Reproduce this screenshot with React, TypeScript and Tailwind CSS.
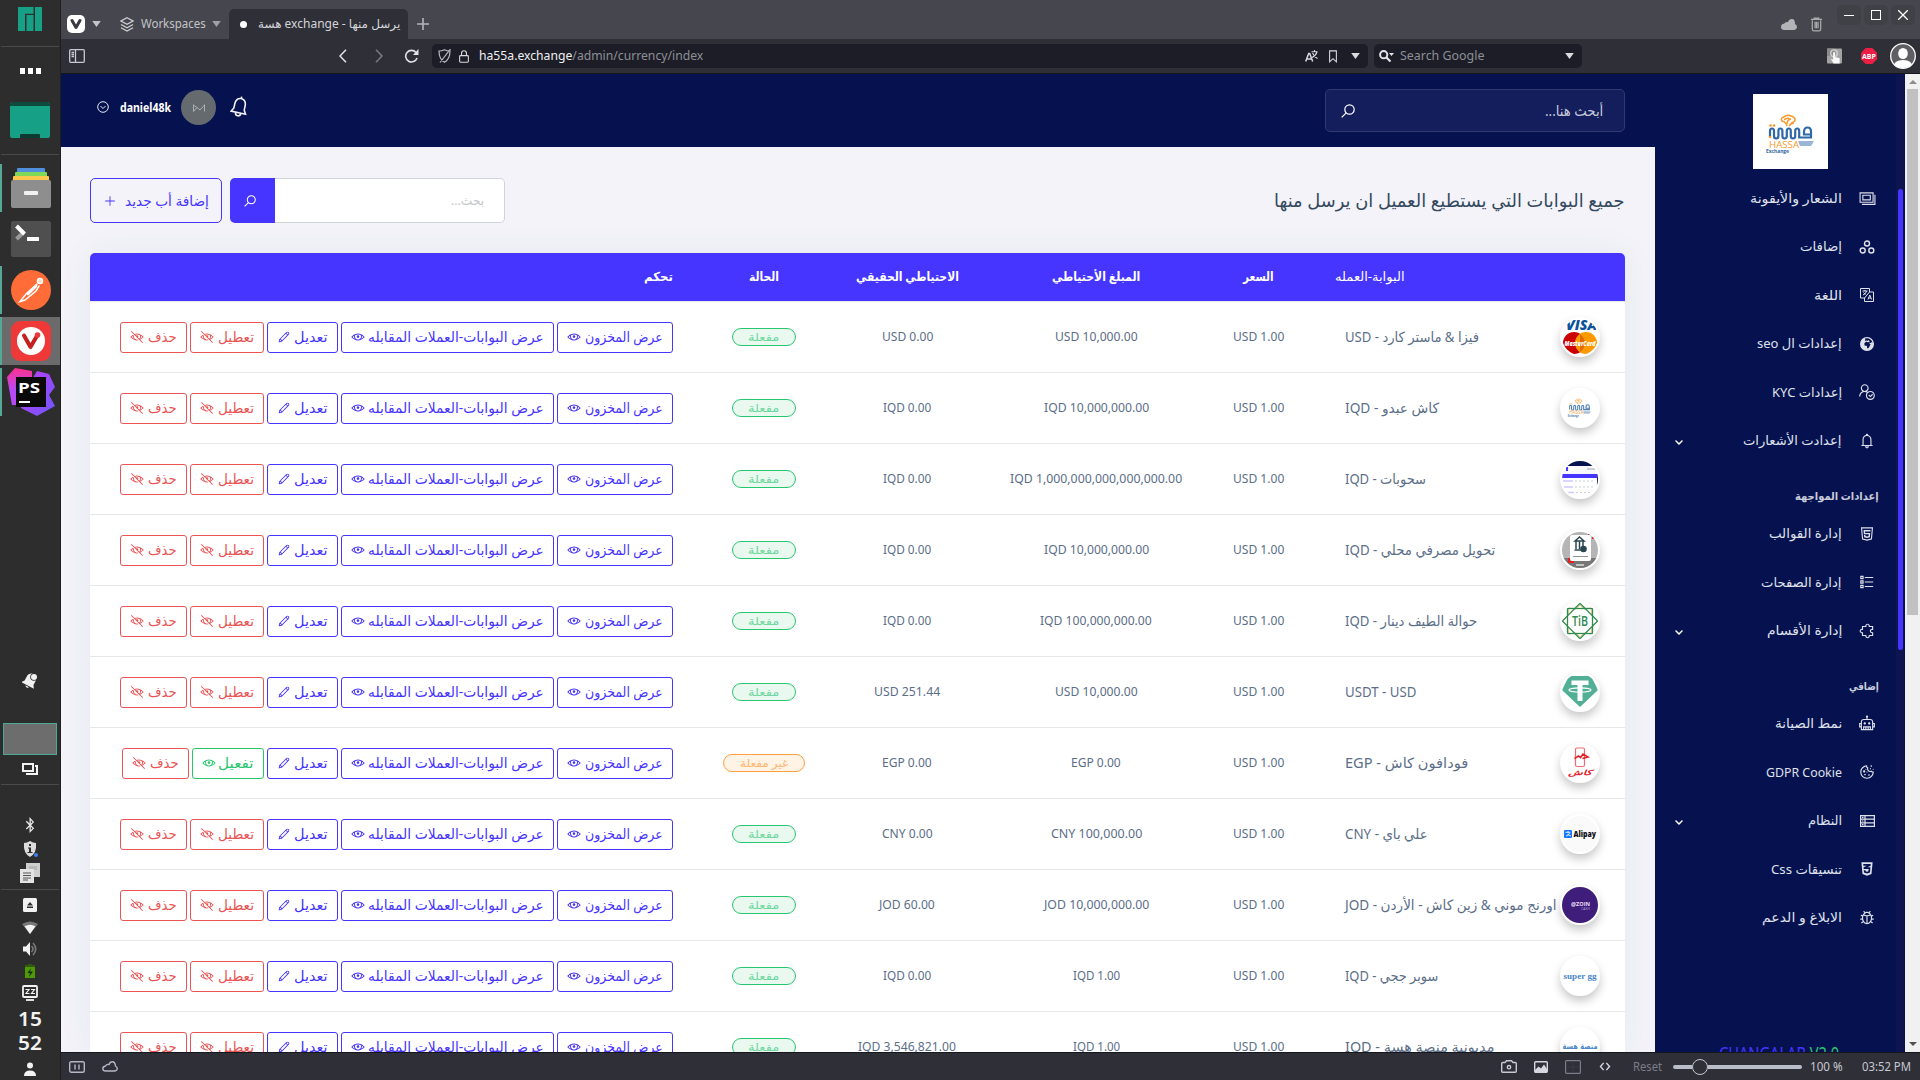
import { useLayoutEffect, useRef, useState } from "react";
import type { ReactNode } from "react";
import {
  LiaEye, LiaEyeSlash, LiaPenSolid, LiaUserCheckSolid, LiaHtml5, LiaPuzzlePieceSolid,
  LiaRobotSolid, LiaCookieBiteSolid, LiaCss3Alt, LiaBugSolid, LiaBell,
  LiaPlusSolid, LiaListSolid,
} from "react-icons/lia";
import { FaChevronDown, FaBluetoothB } from "react-icons/fa";
import { FaEarthAfrica } from "react-icons/fa6";

/* Text squeezed or stretched to an exact advance width. */
function Fit({ w, dir = "rtl", className = "", children }: { w: number; dir?: "rtl" | "ltr"; className?: string; children: ReactNode }) {
  const ref = useRef<HTMLSpanElement>(null);
  const [s, setS] = useState(1);
  useLayoutEffect(() => {
    if (ref.current) setS(w / ref.current.offsetWidth);
  }, [w]);
  return (
    <span dir="ltr" className="flex shrink-0" style={{ width: w }}>
      <span ref={ref} dir={dir} className={"block shrink-0 origin-left whitespace-nowrap " + className} style={{ transform: `scaleX(${s})` }}>
        {children}
      </span>
    </span>
  );
}

function Caret({ className = "" }: { className?: string }) {
  return <svg viewBox="0 0 10 7" className={"h-[6px] w-[9px] shrink-0 " + className}><path d="M0 0h10L5 7z" fill="currentColor" /></svg>;
}

function SearchIcon({ className = "" }: { className?: string }) {
  return <svg viewBox="0 0 14 14" className={"shrink-0 " + className} fill="none" stroke="currentColor" strokeWidth="1.200"><circle cx="8.500" cy="5.500" r="4.700" /><path d="M5.200 8.800.7 13.300" /></svg>;
}

/* ---------- desktop panel ---------- */
function Task({ children, active = false, bar = true, className = "" }: { children: ReactNode; active?: boolean; bar?: boolean; className?: string }) {
  return (
    <div className={"flex h-12 w-[60px] shrink-0 items-center " + (active ? "bg-[#6b6b6b] " : "") + className}>
      <div className={"h-12 w-[2px] shrink-0 " + (bar ? "bg-[#55a896]" : "")} />
      <div className="flex flex-1 justify-center">{children}</div>
    </div>
  );
}

function Panel() {
  return (
    <div className="flex h-full w-[61px] shrink-0 flex-col items-center overflow-hidden border-r border-[#1f1f1f] bg-[#2d2d2d]">
      <svg viewBox="0 0 24 24" className="mt-[7px] h-6 w-6 shrink-0" fill="#16a085"><path d="M0 0h15.500v6.700H7V24H0zM8.500 8H15.500v16H8.500zM17 0h7v24h-7z" /></svg>
      <div className="mt-[15px] h-px w-[58px] shrink-0 bg-[#4a4a4a]" />
      <div className="mt-[21px] flex shrink-0 gap-[3px]">
        <div className="h-[6px] w-[5px] bg-white" /><div className="h-[6px] w-[5px] bg-white" /><div className="h-[6px] w-[5px] bg-white" />
      </div>
      <svg viewBox="0 0 40 36" className="mt-[28px] h-9 w-10 shrink-0"><path d="M2 0h36l2 2v32q0 2-2 2H2q-2 0-2-2V2z" fill="#16a085" /><path d="M2 0h36l2 2v2H0V2z" fill="#0f4a3f" /><path d="M10 36v-3q0-1 1-1h18q1 0 1 1v3z" fill="#0d3a32" /></svg>
      <div className="mt-[16px] h-px w-[58px] shrink-0 bg-[#4a4a4a]" />
      <Task className="mt-[9px]">
        <svg viewBox="0 0 40 40" className="h-10 w-10"><rect x="6" width="28" height="9" rx="1" fill="#508fdb" /><rect x="4" y="4" width="32" height="9" rx="1" fill="#7fd858" /><rect x="2" y="8" width="36" height="9" rx="1" fill="#fdc94c" /><rect y="12" width="40" height="28" rx="2" fill="#8e8e8e" /><rect x="13" y="23" width="14" height="4" rx="1" fill="#f1f1f1" /></svg>
      </Task>
      <Task bar={false} className="mt-[3px]">
        <svg viewBox="0 0 40 36" className="h-9 w-10"><rect width="40" height="36" rx="2" fill="#4f4f4f" /><path d="m5.500 18 7-6.500" stroke="#9a9a9a" strokeWidth="4" /><path d="m5.500 5 8 8" stroke="#fff" strokeWidth="4" /><rect x="16" y="16" width="12" height="4" rx=".5" fill="#fff" /></svg>
      </Task>
      <Task className="mt-[3px]">
        <svg viewBox="0 0 40 40" className="h-10 w-10"><circle cx="20" cy="20" r="20" fill="#ff6c37" /><g stroke="#fff" fill="none" strokeWidth="1.500" strokeLinecap="round"><circle cx="29" cy="11" r="2.500" fill="#ffd9cb" /><path d="M26 14 15 24 9 31.500l5-1.500 11-9 3-5M24 16l-7 7" /><path d="m25 16-8 8" strokeWidth="2.600" /></g></svg>
      </Task>
      <Task active className="mt-[3px]">
        <svg viewBox="0 0 40 40" className="h-10 w-10"><rect width="40" height="40" rx="9" fill="#ef3939" /><circle cx="20" cy="20" r="14" fill="#fff" /><path d="M13 14.500 19.500 26 26.500 14" fill="none" stroke="#c4201f" strokeWidth="4" strokeLinecap="round" strokeLinejoin="round" /><circle cx="26.500" cy="14" r="2.800" fill="#ef3939" /></svg>
      </Task>
      <Task className="mt-[3px]">
        <svg viewBox="0 0 48 48" className="h-12 w-12">
          <defs><linearGradient id="psA" x1="0" y1="0" x2="0" y2="1"><stop offset="0" stopColor="#ff318c" /><stop offset=".6" stopColor="#b74af7" /></linearGradient><linearGradient id="psB" x1="0" y1="0" x2="1" y2="1"><stop offset="0" stopColor="#c53df0" /><stop offset="1" stopColor="#6b57ff" /></linearGradient></defs>
          <path d="M14 40V30L30 3l12 3 6 13-6 8 6 11-18 10z" fill="url(#psB)" /><path d="M0 9 8 0l17 3v15L13 37H5z" fill="url(#psA)" /><rect x="9" y="9" width="30" height="30" fill="#0a0a0a" /><rect x="12" y="33" width="11" height="2" fill="#fff" /><text x="11" y="24.500" fontSize="15" fontWeight="700" fill="#fff" fontFamily="Open Sans, sans-serif" textLength="22" lengthAdjust="spacingAndGlyphs">PS</text>
        </svg>
      </Task>
      <div className="flex-1" />
      <svg viewBox="0 0 16 16" className="h-4 w-4 shrink-0" fill="#f2f2f2"><g transform="rotate(28 8 8)"><path d="M8 0q5 1 5 6v4l2 3H1l2-3V6q0-5 5-6zM6 14h4q-2 3-4 0z" /></g><circle cx="12" cy="4" r="3.800" fill="#2d2d2d" /><circle cx="12" cy="4" r="3" /></svg>
      <div className="mt-[34px] h-8 w-[54px] shrink-0 border border-[#4fa896] bg-[#6d6d6d]" />
      <svg viewBox="0 0 16 12" className="mt-[8px] h-3 w-4 shrink-0" fill="none" stroke="#f2f2f2" strokeWidth="2"><path d="M1 1h10v7H1zM13 3h2v8H4" /></svg>
      <div className="mt-[9px] h-px w-[58px] shrink-0 bg-[#4a4a4a]" />
      <FaBluetoothB className="mt-[32px] h-4 w-4 shrink-0 text-[#e6e6e6]" />
      <svg viewBox="0 0 16 16" className="mt-[8px] h-4 w-4 shrink-0"><path d="M8 0q3 2 6 2 1 10-6 14Q1 12 2 2q3 0 6-2z" fill="#dcdcdc" /><path d="M7 3h2v2H7zM6 6.500h3V11h1.500v1h-5v-1H7V7.500H6z" fill="#2d2d2d" /><circle cx="14" cy="14" r="2" fill="#3b82f6" /></svg>
      <svg viewBox="0 0 20 20" className="mt-[6px] h-5 w-5 shrink-0"><path d="M6 0h14v14H6z" fill="#cfcfcf" /><path d="M9 4h8M9 6h8" stroke="#999" strokeWidth=".8" /><path d="M0 6h14v14H0z" fill="#e4e4e4" /><path d="M3 10h8M3 12.500h8M3 15h8M3 17h5" stroke="#555" /></svg>
      <div className="mt-[6px] h-px w-[58px] shrink-0 bg-[#4a4a4a]" />
      <svg viewBox="0 0 14 14" className="mt-[8px] h-[14px] w-[14px] shrink-0"><rect width="14" height="14" rx="1.500" fill="#f2f2f2" /><path d="m7 4 3 3.500H4zM4 8.500h6V10H4z" fill="#2d2d2d" /></svg>
      <svg viewBox="0 0 16 13" className="mt-[9px] h-[13px] w-4 shrink-0"><path d="M8 13 0 3q8-5 16 0z" fill="#777" /><path d="M8 13 2.500 5.300q5.500-3 11 0z" fill="#f2f2f2" /></svg>
      <svg viewBox="0 0 16 14" className="mt-[8px] h-[14px] w-4 shrink-0"><path d="M1 4.500h3L8 0v14L4 9.500H1z" fill="#f2f2f2" /><path d="M9.500 4q3 3 0 6M11 1q5.500 6 0 12" fill="none" stroke="#7a7a7a" strokeWidth="1.600" /></svg>
      <svg viewBox="0 0 10 14" className="mt-[8px] h-[14px] w-[10px] shrink-0"><path d="M3 0h4v1h3v2H0V1h3z" fill="#2f5a14" /><path d="M0 3h10v11H0z" fill="#4e9a06" /><path d="M6 4 2.500 9H5l-1 4 4-5.500H5z" fill="#1c2a12" /></svg>
      <svg viewBox="0 0 16 16" className="mt-[7px] h-4 w-4 shrink-0" fill="none" stroke="#f2f2f2"><rect x="1" y="1" width="14" height="11" rx="1" strokeWidth="1.800" /><path d="M3.500 4.500h3.500L4 8.500h3.500M9 4.500h3.500L9.500 8.500H13" strokeWidth="1.200" /><path d="M4 15h8" strokeWidth="1.800" /></svg>
      <div className="mt-[6px] flex h-6 shrink-0 items-center"><Fit w={24} dir="ltr" className="font-['Noto_Sans',sans-serif] text-[20px] leading-6 font-semibold text-[#f2f2f2]">15</Fit></div>
      <div className="flex h-6 shrink-0 items-center"><Fit w={24} dir="ltr" className="font-['Noto_Sans',sans-serif] text-[20px] leading-6 font-semibold text-[#f2f2f2]">52</Fit></div>
      <svg viewBox="0 0 12 14" className="mt-[7px] mb-[4px] h-[14px] w-3 shrink-0" fill="#f2f2f2"><circle cx="6" cy="3.500" r="3" /><path d="M0 14q0-5.500 6-5.500T12 14z" /></svg>
    </div>
  );
}

/* ---------- browser chrome ---------- */
function TabBar() {
  return (
    <div className="flex h-[39px] shrink-0 bg-[#46464e] text-[#c4c4c8]">
      <div className="flex w-[168px] items-center pt-[9px] pl-[6px]">
        <div className="flex h-[18px] w-[18px] items-center justify-center rounded-[5px] bg-white"><svg viewBox="0 0 12 12" className="h-3 w-3"><path d="m2 2.500 4 7 4-7" fill="none" stroke="#3a3a42" strokeWidth="3" strokeLinecap="round" strokeLinejoin="round" /></svg></div>
        <Caret className="ml-[7px] h-[6px] w-2" />
        <svg viewBox="0 0 14 15" className="ml-[19px] h-[15px] w-[14px]" fill="none" stroke="#d0d0d4" strokeWidth="1.200"><path d="m7 .8 6 3.200-6 3.200L1 4zM1 7.500l6 3.200 6-3.200M1 10.700l6 3.300 6-3.300" /></svg>
        <div className="ml-[7px]"><Fit w={65} dir="ltr" className="text-[12px]">Workspaces</Fit></div>
        <Caret className="ml-[6px] h-[6px] w-2 text-[#a0a0a4]" />
      </div>
      <div className="mt-[9px] flex w-[179px] items-center rounded-t-[5px] bg-[#2e2f37] pl-[11px]">
        <div className="h-[7px] w-[7px] rounded-full bg-white" />
        <div className="ml-[11px]"><Fit w={142} dir="ltr" className="text-[12px] text-[#d5d5da]">هسة exchange - يرسل منها</Fit></div>
      </div>
      <div className="flex flex-1 items-center pt-[9px] pl-[9px]">
        <svg viewBox="0 0 12 12" className="h-3 w-3"><path d="M6 0v12M0 6h12" stroke="#b5b5b9" strokeWidth="1.600" /></svg>
      </div>
      <div className="flex items-center gap-[13px] pt-[9px] pr-[14px]">
        <svg viewBox="0 0 16 11" className="h-[11px] w-4" fill="#b4b4b8"><path d="M3.500 11Q0 11 0 8t3-3.200Q4.500 2.500 7 3q1-3 4-3t3 5q2 1 2 3t-2.500 3z" /></svg>
        <svg viewBox="0 0 14 15" className="h-[15px] w-[13px]" fill="none" stroke="#aaaaae" strokeWidth="1.300"><path d="M1 2h12M4.500 1.500V.7h5v.8M2.500 3v9.500q0 1.800 2 1.800h5q2 0 2-1.800V3M5.500 4.500v7M7 4.500v7M8.700 4.500v7" /></svg>
      </div>
      <div className="flex gap-[3px] pt-[5px] pr-[5px] text-white">
        <div className="flex h-5 w-6 items-center justify-center rounded-[5px] bg-[#404047]"><div className="h-px w-[10px] bg-white" /></div>
        <div className="flex h-5 w-6 items-center justify-center rounded-[5px] bg-[#404047]"><div className="h-[10px] w-[10px] border border-white" /></div>
        <div className="flex h-5 w-6 items-center justify-center rounded-[5px] bg-[#404047]"><svg viewBox="0 0 10 10" className="h-[10px] w-[10px]"><path d="m0 0 10 10M10 0 0 10" stroke="#fff" strokeWidth="1.300" /></svg></div>
      </div>
    </div>
  );
}

function AddressBar() {
  return (
    <div className="flex h-[35px] shrink-0 items-center border-b border-[#16171d] bg-[#2e2f37] text-[#dcdce0]">
      <svg viewBox="0 0 16 14" className="ml-[8px] h-[14px] w-4" fill="none" stroke="#c6c8d2" strokeWidth="1.300"><rect x=".7" y=".7" width="14.600" height="12.600" rx="1" /><path d="M6.500 1v12M2.500 3.500H5M2.500 5.500H5M2.500 7.500H5" /></svg>
      <div className="flex w-[347px] items-center justify-end pr-[13px]">
        <svg viewBox="0 0 8 14" className="h-[14px] w-2" fill="none" stroke="#e2e3e8" strokeWidth="1.500"><path d="M7 .7 1 7l6 6.300" /></svg>
        <svg viewBox="0 0 8 14" className="ml-[28px] h-[14px] w-2" fill="none" stroke="#7b7c84" strokeWidth="1.500"><path d="m1 .7 6 6.300-6 6.300" /></svg>
        <svg viewBox="0 0 15 14" className="ml-[21px] h-[14px] w-[15px]" fill="none" stroke="#e2e3e8" strokeWidth="1.600"><path d="M12 3.500A5.800 5.800 0 1 0 13 9" /><path d="M14.500 0v6H9z" fill="#e2e3e8" stroke="none" /></svg>
      </div>
      <div className="flex h-6 w-[936px] items-center rounded-[5px] bg-[#1c1d26] pr-[8px] pl-[6px]">
        <svg viewBox="0 0 13 14" className="h-[14px] w-[13px]" fill="none" stroke="#b9bac4" strokeWidth="1.200"><path d="M1 2q3 0 5.500-1.300Q9 2 12 2q0 8-5.500 11.300Q1 10 1 2zM12.500 0 2 13.500" /></svg>
        <svg viewBox="0 0 11 14" className="ml-[8px] h-[13px] w-[10px]" fill="none" stroke="#d9dae0" strokeWidth="1.200"><rect x=".7" y="6" width="9.600" height="7.300" rx="1" /><path d="M2.800 6V3.500q0-2.800 2.700-2.800T8.200 3.500V6" /></svg>
        <div className="ml-[10px]"><Fit w={224} dir="ltr" className="text-[13px] text-[#8e8f97]"><span className="text-[#f0f0f2]">ha55a.exchange</span>/admin/currency/index</Fit></div>
        <div className="flex-1" />
        <svg viewBox="0 0 13 12" className="h-3 w-[13px]" fill="none" stroke="#d9dae0" strokeWidth="1.500"><path d="m.7 11.500 3-8h1l3 8M1.700 9h5" /><path d="M6.500 1.800h6M9.500 0v2M7 7.500q4-2 5-5.500M7.500 3q2 4 5 5.500" strokeWidth="1.100" /></svg>
        <svg viewBox="0 0 9 14" className="ml-[11px] h-[13px] w-2" fill="none" stroke="#d9dae0" strokeWidth="1.200"><path d="M.7.700h7.600v12.300L4.500 9.500.700 13z" /></svg>
        <Caret className="ml-[14px] h-[6px] w-2" />
      </div>
      <div className="ml-[6px] flex h-6 w-[208px] items-center rounded-[5px] bg-[#1c1d26] pr-[8px] pl-[5px]">
        <svg viewBox="0 0 15 12" className="h-3 w-[15px]" fill="none" stroke="#e2e3e8"><circle cx="4.700" cy="4.700" r="3.600" strokeWidth="2" /><path d="m7.500 7.500 4 4" strokeWidth="2.200" /><path d="M10 3h5l-2.500 3z" fill="#e2e3e8" stroke="none" /></svg>
        <div className="ml-[6px]"><Fit w={84} dir="ltr" className="text-[13px] text-[#8e8f97]">Search Google</Fit></div>
        <div className="flex-1" />
        <Caret className="h-[6px] w-2" />
      </div>
      <div className="flex-1" />
      <svg viewBox="0 0 16 16" className="h-4 w-[15px]"><rect width="16" height="16" rx="1" fill="#a3a3a3" /><path d="M0 0h8v8H0z" fill="#8a8a8a" /><circle cx="7.500" cy="5" r="3.500" fill="none" stroke="#cfcfcf" strokeWidth="1.500" /><path d="M6.500 4h2v5l5 1.500V16H7l-3-5 2.500 1z" fill="#fafafa" /></svg>
      <svg viewBox="0 0 16 16" className="ml-[19px] h-4 w-4"><path d="M4.700 0h6.600L16 4.700v6.600L11.300 16H4.700L0 11.300V4.700z" fill="#ed1e45" /><text x="8" y="10.800" textAnchor="middle" fontSize="7.500" fontWeight="700" fill="#fff" fontFamily="Open Sans, sans-serif" textLength="14" lengthAdjust="spacingAndGlyphs">ABP</text></svg>
      <svg viewBox="0 0 26 26" className="mr-[4px] ml-[13px] h-[26px] w-[26px]"><defs><clipPath id="av"><circle cx="13" cy="13" r="12" /></clipPath></defs><circle cx="13" cy="13" r="12.300" fill="#5f5f63" stroke="#fff" strokeWidth="1.300" /><g clipPath="url(#av)" fill="#fff"><ellipse cx="13" cy="10.500" rx="4.800" ry="5.500" /><path d="M3 26q0-9 10-9t10 9z" /></g></svg>
    </div>
  );
}

function StatusBar() {
  return (
    <div className="flex h-7 shrink-0 items-center border-t border-[#16171d] bg-[#2e2f37] text-[#c6c8d2]">
      <svg viewBox="0 0 16 12" className="ml-[8px] h-3 w-4" fill="none" stroke="#b4b8c6" strokeWidth="1.400"><rect x=".7" y=".7" width="14.600" height="10.600" rx="1.500" /><path d="M6 3.500v5M10 3.500v5" /></svg>
      <svg viewBox="0 0 16 11" className="ml-[17px] h-[11px] w-4" fill="none" stroke="#b4b8c6" strokeWidth="1.400"><path d="M3.500 10Q.8 10 .8 7.700T3.500 5Q4.500 3 7 3.500 8 .8 10.500.8T13.500 5q1.800 1 1.800 2.700T13 10z" /></svg>
      <div className="flex-1" />
      <svg viewBox="0 0 16 13" className="h-[13px] w-4" fill="none" stroke="#c6c8d2" strokeWidth="1.400"><path d="M1.700 2.500H4L5.500.7h5L12 2.500h2.300q1 0 1 1v7.800q0 1-1 1H1.700q-1 0-1-1V3.500q0-1 1-1z" /><circle cx="8" cy="7.200" r="1.700" /></svg>
      <svg viewBox="0 0 14 12" className="ml-[17px] h-3 w-[14px]"><rect x=".7" y=".7" width="12.600" height="10.600" rx="1" fill="none" stroke="#d4d7e0" strokeWidth="1.400" /><path d="M1 9 4.500 5.500 7 7.500 10 3.500 13 8v3.300H1z" fill="#d4d7e0" /></svg>
      <svg viewBox="0 0 16 14" className="ml-[17px] h-[14px] w-4" fill="none" stroke="#7b7d88" strokeWidth="1.200"><rect x=".6" y=".6" width="14.800" height="12.800" rx="1" /><path d="M8 1v12M1 7h14" stroke="#3d3e48" strokeWidth=".8" /></svg>
      <svg viewBox="0 0 12 10" className="ml-[18px] h-[9px] w-3" fill="none" stroke="#d4d7e0" strokeWidth="1.600"><path d="M4.500 1 1 5l3.500 4M7.500 1 11 5 7.500 9" /></svg>
      <div className="ml-[22px]"><Fit w={29} dir="ltr" className="text-[12px] text-[#7b7d88]">Reset</Fit></div>
      <div className="ml-[11px] flex w-[129px] items-center">
        <div className="h-1 w-[19px] rounded-l bg-[#b9bcc9]" />
        <div className="h-4 w-4 rounded-full border border-[#c6c8d2] bg-[#2e2f37]" />
        <div className="h-1 flex-1 rounded-r bg-[#b9bcc9]" />
      </div>
      <div className="ml-[8px]"><Fit w={33} dir="ltr" className="text-[12px]">100 %</Fit></div>
      <div className="mr-[9px] ml-[19px]"><Fit w={49} dir="ltr" className="text-[12px]">03:52 PM</Fit></div>
    </div>
  );
}

/* ---------- logos ---------- */
function HassaMark() {
  return (
    <g>
      <path d="M34 21q-1-4-5-5-2-3 2-4 3-3 7-1 4 1 4 4 0 2-4 3M34 19q0-4 4-5M31 15q3-3 6-1M36 21q2-3 5-3" fill="none" stroke="#f79a2b" strokeWidth="1.500" />
      <circle cx="17.500" cy="20.500" r="1.300" fill="#f79a2b" /><circle cx="21" cy="20.500" r="1.300" fill="#f79a2b" /><circle cx="17" cy="32" r="1.300" fill="#f79a2b" />
      <path d="M17 31v-5q0-2.500 2-2.500t2 2.500v5q0 2.500 2.200 2.500t2.200-2.500v-5q0-2.500 2-2.500t2 2.500v5q0 2.500 2.200 2.500t2.200-2.500v-5q0-2.500 2-2.500t2 2.500v5q0 2.500 2.200 2.500t2.200-2.500v-5q0-2.500 2-2.500t2 2.500v6.500H58v-6q0-4-3.500-4T51 27v2.500h7" fill="none" stroke="#2f69a8" strokeWidth="2.200" />
      <text x="16" y="42.500" fontSize="9.800" fill="#f79a2b" fontFamily="Open Sans, sans-serif" textLength="30" lengthAdjust="spacingAndGlyphs">HASSA</text>
      <path d="M45 36h16l-3 5H47z" fill="#6f96c4" opacity=".7" />
      <text x="13" y="47.500" fontSize="5.500" fontWeight="700" fill="#2f69a8" fontFamily="Open Sans, sans-serif" textLength="23" lengthAdjust="spacingAndGlyphs">Exchange</text>
    </g>
  );
}

function Logo({ kind }: { kind: string }) {
  const f = "Open Sans, sans-serif";
  return (
    <div className="h-10 w-10 shrink-0 overflow-hidden rounded-full border-2 border-white bg-white shadow-[0_5px_10px_rgba(0,0,0,0.22)]">
      <svg viewBox="2 2 36 36" className="h-9 w-9">
        {kind === "visa" && <g><text x="6" y="13" fontSize="14" fontStyle="italic" fontWeight="800" fill="#0a5299" fontFamily={f} textLength="31" lengthAdjust="spacingAndGlyphs">VISA</text><circle cx="14" cy="26" r="11" fill="#cc0000" /><circle cx="26" cy="26" r="11" fill="#ff9900" /><path d="M20 17v18q5-4 5-9t-5-9" fill="#e06a00" /><text x="4.500" y="28.500" fontSize="7.500" fontStyle="italic" fontWeight="800" fill="#fff" fontFamily={f} textLength="31" lengthAdjust="spacingAndGlyphs">MasterCard</text></g>}
        {kind === "hassa" && <g transform="translate(1.500 6) scale(.48)" opacity=".85"><HassaMark /></g>}
        {kind === "shot" && <g><path d="M2 2h36v5H2z" fill="#06114f" /><path d="M2 7h36v31H2z" fill="#f6f6fb" /><path d="M2 15h35v4H2z" fill="#4634ff" /><path d="M6 8h2v4H6z" fill="#4634ff" /><path d="M9 8h6v4H9z" fill="#fff" /><path d="M27 10h9" stroke="#99aaaa" strokeWidth="1" /><path d="M2 19h34v19H2z" fill="#fff" /><path d="M3 22h10M3 28h10M7 33.500h7" stroke="#cfc9ff" strokeWidth="1.500" /><path d="M15 22h20M15 28h20M16 33.500h16" stroke="#c5d0d4" strokeWidth="1" strokeDasharray="2 2" /><path d="M37 15h1v12h-1z" fill="#06114f" /></g>}
        {kind === "bank" && <g><path d="M2 2h36v36H2z" fill="#b5b5b5" /><path d="M2 28h36v10H2z" fill="#777" /><path d="M28 4h5v5" fill="none" stroke="#e22222" strokeWidth="2" /><path d="M9 28v4h5" fill="none" stroke="#e22222" strokeWidth="2" /><rect x="10" y="5" width="21" height="26" rx="2" fill="#fff" /><path d="m15 11 4.500-4 4.500 4zM16 11v8M19.500 11v8M23 11v5M14.500 20h7" fill="none" stroke="#2c4552" strokeWidth="1.500" /><circle cx="23.500" cy="19" r="3.300" fill="#2c4552" /><path d="M13 26.500h15" stroke="#88939a" strokeWidth="1" /><path d="M16 35h8" stroke="#dddddd" strokeWidth="1.500" /></g>}
        {kind === "tib" && <g fill="none"><g stroke="#f2c878" strokeWidth="1"><path d="m20 4 4 4 7-1 1 7 5 6-5 6-1 7-7-1-4 4-4-4-7 1-1-7-5-6 5-6 1-7 7 1z" /></g><g stroke="#2f8a50" strokeWidth="1.300"><rect x="7.500" y="7.500" width="25" height="25" /><rect x="7.500" y="7.500" width="25" height="25" transform="rotate(45 20 20)" /></g><circle cx="20" cy="20" r="11" fill="#fff" /><text x="12" y="25" fontSize="14" fontWeight="600" fill="#2f8a50" fontFamily={f} textLength="16" lengthAdjust="spacingAndGlyphs">TiB</text></g>}
        {kind === "usdt" && <g><path d="M9 4h22l7 14-18 17L2 18z" fill="#50af95" /><path d="M11.500 8.500h17V13h-6v16h-5V13h-6z" fill="#fff" /><ellipse cx="20" cy="18" rx="11" ry="2.200" fill="none" stroke="#fff" strokeWidth="1.200" /></g>}
        {kind === "voda" && <g><rect x="15.500" y="5" width="9" height="18.500" rx="1.500" fill="none" stroke="#f06a70" strokeWidth="1.200" /><path d="m14.500 15.500 4-2.500 2 1.500 2.500-3.500 5 3-5.500 1.500" fill="none" stroke="#e3222c" strokeWidth="1.600" /><text x="20" y="32" textAnchor="middle" fontSize="7" fontStyle="italic" fontWeight="700" fill="#e3222c" fontFamily="DejaVu Sans, sans-serif" textLength="24" lengthAdjust="spacingAndGlyphs">كاش</text></g>}
        {kind === "alipay" && <g><path d="M2 2h36v36H2z" fill="#fafafa" /><rect x="4" y="16" width="8" height="8" rx="1" fill="#1677ff" /><path d="M5.500 18.300h5M8 17v2M6 22q3-.5 3.500-3M7.500 20.500l3.500 1.500" stroke="#fff" strokeWidth=".8" fill="none" /><text x="13.500" y="22.700" fontSize="8" fontWeight="800" fill="#111" fontFamily={f} textLength="22.500" lengthAdjust="spacingAndGlyphs">Alipay</text></g>}
        {kind === "zain" && <g><path d="M2 2h36v36H2z" fill="#3f1d7a" /><text x="11" y="21" fontSize="6" fontWeight="700" fill="#e8def7" fontFamily={f} textLength="19" lengthAdjust="spacingAndGlyphs">@ZOIN</text><text x="21" y="24.500" fontSize="3.500" fill="#b7a3da" fontFamily={f} textLength="9">CASH</text></g>}
        {kind === "super" && <text x="3.500" y="22.500" fontSize="8.500" fontWeight="700" fill="#4a86c8" fontFamily="Liberation Serif, serif" textLength="33" lengthAdjust="spacingAndGlyphs">super gg</text>}
        {kind === "platform" && <text x="20" y="21.500" textAnchor="middle" fontSize="8.500" fontWeight="700" fill="#4a86c8" fontFamily="DejaVu Sans, sans-serif" textLength="35" lengthAdjust="spacingAndGlyphs">منصة هسة</text>}
      </svg>
    </div>
  );
}

/* ---------- page ---------- */
type Row = { name: string; nw: number; logo: string; res: string; rw: number; real: string; lw: number; off?: boolean };
const rows: Row[] = [
  { name: "فيزا & ماستر كارد - USD", nw: 134, logo: "visa", res: "USD 10,000.00", rw: 83, real: "USD 0.00", lw: 51 },
  { name: "كاش عبدو - IQD", nw: 94, logo: "hassa", res: "IQD 10,000,000.00", rw: 105, real: "IQD 0.00", lw: 48 },
  { name: "سحوبات - IQD", nw: 81, logo: "shot", res: "IQD 1,000,000,000,000,000.00", rw: 172, real: "IQD 0.00", lw: 48 },
  { name: "تحويل مصرفي محلي - IQD", nw: 150, logo: "bank", res: "IQD 10,000,000.00", rw: 105, real: "IQD 0.00", lw: 48 },
  { name: "حوالة الطيف دينار - IQD", nw: 132, logo: "tib", res: "IQD 100,000,000.00", rw: 112, real: "IQD 0.00", lw: 48 },
  { name: "USDT - USD", nw: 71, logo: "usdt", res: "USD 10,000.00", rw: 83, real: "USD 251.44", lw: 66 },
  { name: "فودافون كاش - EGP", nw: 123, logo: "voda", res: "EGP 0.00", rw: 50, real: "EGP 0.00", lw: 50, off: true },
  { name: "علي باي - CNY", nw: 83, logo: "alipay", res: "CNY 100,000.00", rw: 91, real: "CNY 0.00", lw: 51 },
  { name: "اورنج موني & زين كاش - الأردن - JOD", nw: 212, logo: "zain", res: "JOD 10,000,000.00", rw: 105, real: "JOD 60.00", lw: 56 },
  { name: "سوبر ججي - IQD", nw: 93, logo: "super", res: "IQD 1.00", rw: 47, real: "IQD 0.00", lw: 48 },
  { name: "مديونية منصة هسة - IQD", nw: 149, logo: "platform", res: "IQD 1.00", rw: 47, real: "IQD 3,546,821.00", lw: 98 },
];

const GRID = "grid grid-cols-[608px_131px_156px_222px_102px_316px] items-center";

function Action({ text, w, width, tone, icon }: { text: string; w: number; width: string; tone: "blue" | "red" | "green"; icon: ReactNode }) {
  const c = tone === "blue" ? "border-[#4634ff] text-[#4634ff]" : tone === "red" ? "border-[#ea5455] text-[#ea5455]" : "border-[#28c76f] text-[#28c76f]";
  return (
    <div className={"flex h-[31px] shrink-0 items-center justify-between rounded-[3px] border px-[9px] " + width + " " + c}>
      <span className="mb-[1px] flex text-[14px]">{icon}</span>
      <Fit w={w} className="text-[14px] leading-5">{text}</Fit>
    </div>
  );
}

function TableRow({ r }: { r: Row }) {
  return (
    <div className={GRID + " h-[71px] shrink-0 border-t border-[#e5e7ea] text-[#5b6e88]"}>
      <div className="flex justify-end gap-[3px] pr-[25px]">
        <Action text="حذف" w={29} width="w-[67px]" tone="red" icon={<LiaEyeSlash />} />
        {r.off
          ? <Action text="تفعيل" w={36} width="w-[72px]" tone="green" icon={<LiaEye />} />
          : <Action text="تعطيل" w={36} width="w-[74px]" tone="red" icon={<LiaEyeSlash />} />}
        <Action text="تعديل" w={34} width="w-[71px]" tone="blue" icon={<LiaPenSolid />} />
        <Action text="عرض البوابات-العملات المقابله" w={176} width="w-[213px]" tone="blue" icon={<LiaEye />} />
        <Action text="عرض المخزون" w={78} width="w-[116px]" tone="blue" icon={<LiaEye />} />
      </div>
      <div className="flex justify-center">
        {r.off
          ? <div className="flex h-[18px] w-[82px] items-center justify-center rounded-full border border-[#ff9f43] bg-[#fff3e6]"><Fit w={48} className="text-[11px] leading-4 text-[#ffb56e]">غير مفعلة</Fit></div>
          : <div className="flex h-[18px] w-[64px] items-center justify-center rounded-full border border-[#28c76f] bg-[#e9f9f0]"><Fit w={31} className="text-[11px] leading-4 text-[#6fd79f]">مفعلة</Fit></div>}
      </div>
      <div className="flex justify-center"><Fit w={r.lw} dir="ltr" className="text-[13px]">{r.real}</Fit></div>
      <div className="flex justify-center"><Fit w={r.rw} dir="ltr" className="text-[13px]">{r.res}</Fit></div>
      <div className="flex justify-center"><Fit w={51} dir="ltr" className="text-[13px]">USD 1.00</Fit></div>
      <div className="flex items-center justify-between pr-[25px] pl-[36px]">
        <div className="pb-[2px]"><Fit w={r.nw} className="text-[14px]">{r.name}</Fit></div>
        <Logo kind={r.logo} />
      </div>
    </div>
  );
}

function Table() {
  return (
    <div className="mt-[30px] flex flex-1 flex-col overflow-hidden rounded-t-[5px] bg-white shadow-[0_0_35px_rgba(50,60,100,0.06)]">
      <div className={GRID + " h-12 shrink-0 bg-[#4634ff] text-[12.500px] font-bold text-white"}>
        <div className="flex justify-end pr-[25px]"><Fit w={29}>تحكم</Fit></div>
        <div className="flex justify-center"><Fit w={30}>الحالة</Fit></div>
        <div className="flex justify-center"><Fit w={103}>الاحتياطي الحقيقي</Fit></div>
        <div className="flex justify-center"><Fit w={88}>المبلغ الأحتياطي</Fit></div>
        <div className="flex justify-center"><Fit w={31}>السعر</Fit></div>
        <div className="flex pl-[26px] font-normal"><Fit w={70}>البوابة-العمله</Fit></div>
      </div>
      {rows.map((r) => <TableRow key={r.name} r={r} />)}
    </div>
  );
}

function Topbar() {
  return (
    <div className="flex h-[73px] shrink-0 items-center bg-[#06114f] pr-[30px] pl-[36px]">
      <div className="mb-[6px] flex items-center">
        <svg viewBox="0 0 12 12" className="mb-[2px] h-3 w-3" fill="none" stroke="#e8e9f0"><circle cx="6" cy="6" r="5.300" /><path d="m3.500 5 2.500 2.500L8.500 5" /></svg>
        <div className="ml-[11px]"><Fit w={51} dir="ltr" className="text-[12px] font-bold text-white">daniel48k</Fit></div>
        <div className="ml-[10px] flex h-[35px] w-[35px] items-center justify-center rounded-full bg-[#646a6e]"><svg viewBox="0 0 12 8" className="h-2 w-3" fill="none" stroke="#b4b8ba" strokeWidth=".9"><path d="M.5.500v7M11.500.500v7M.5 7.500 4 3.500l3 2.500 4.500-5M1 1.500 4 3.500" /></svg></div>
        <svg viewBox="0 0 18 20" className="mb-[2px] ml-[14px] h-[22px] w-[19px]" fill="none" stroke="#f2f3f8" strokeWidth="1.500"><g transform="rotate(12 9 10)"><path d="M9 1.800q5 .5 5 6.200v4l2 3.500H2L4 12V8q0-5.700 5-6.200zM9 0v2" /><path d="M6.500 16q0 2.500 2.500 2.500t2.500-2.500" /></g></svg>
      </div>
      <div className="flex-1" />
      <div className="flex h-[43px] w-[300px] items-center justify-between rounded-[5px] border border-[#303a70] bg-[#141e5c] pr-[21px] pl-[15px]">
        <SearchIcon className="h-[14px] w-[14px] text-white" />
        <Fit w={58} className="text-[14px] text-[#c5c8da]">أبحث هنا...</Fit>
      </div>
    </div>
  );
}

function Page() {
  return (
    <div className="flex min-w-0 flex-1 flex-col bg-[#f3f3f9]">
      <Topbar />
      <div className="flex min-h-0 flex-1 flex-col overflow-hidden pt-[31px] pr-[30px] pl-[29px]">
        <div className="flex h-[45px] shrink-0 items-center">
          <div className="flex h-full w-[132px] items-center justify-between rounded-[5px] border border-[#4634ff] pr-[12px] pl-[12px] text-[#4634ff]">
            <LiaPlusSolid className="h-[14px] w-[14px]" />
            <Fit w={84} className="text-[14px]">إضافة أب جديد</Fit>
          </div>
          <div className="ml-[8px] flex h-full w-[275px]">
            <div className="flex w-[45px] items-center justify-center rounded-l-[5px] bg-[#4634ff] pr-[6px] text-white"><SearchIcon className="h-3 w-3" /></div>
            <div className="flex flex-1 items-center justify-end rounded-r-[5px] border border-l-0 border-[#ced4da] bg-white pr-[20px]"><Fit w={33} className="text-[13px] text-[#c3c6ca]">بحث...</Fit></div>
          </div>
          <div className="flex-1" />
          <Fit w={351} className="text-[18px] text-[#34495e]">جميع البوابات التي يستطيع العميل ان يرسل منها</Fit>
        </div>
        <Table />
      </div>
    </div>
  );
}

/* ---------- admin sidebar ---------- */
function Item({ text, w, icon, more = false }: { text: string; w: number; icon: ReactNode; more?: boolean }) {
  return (
    <div className="flex h-[48.500px] shrink-0 items-center pr-[21px] pl-[19px] text-[#dfe1ea]">
      <div className="w-[10px]">{more && <FaChevronDown className="mt-[4px] h-[9px] w-[10px] text-white" />}</div>
      <div className="flex-1" />
      <Fit w={w} className="text-[13px]">{text}</Fit>
      <div className="ml-[16px] flex w-[18px] justify-center text-[18px]">{icon}</div>
    </div>
  );
}

function Heading({ text, w }: { text: string; w: number }) {
  return (
    <div className="flex h-[44.500px] shrink-0 items-center justify-end pt-[17px] pr-[18px]">
      <Fit w={w} className="text-[11px] font-bold text-[#c9ccdb]">{text}</Fit>
    </div>
  );
}

function Sidebar() {
  return (
    <div className="flex w-[250px] shrink-0 bg-[#06114f]">
      <div className="flex w-[241px] flex-col overflow-hidden">
        <svg viewBox="0 0 75 75" className="mt-[20px] ml-[98px] h-[75px] w-[75px] shrink-0 bg-white"><g transform="translate(0 11)"><HassaMark /></g></svg>
        <div className="mt-[5px] -mr-[1px] flex flex-1 flex-col">
          <Item text="الشعار والأيقونة" w={92} icon={<svg viewBox="0 0 18 14" className="h-[13px] w-[17px]" fill="none" stroke="currentColor" strokeWidth="1.200"><path d="M1 1h14v10H1zM4 3.500h8v5H4zM3 13.300h14V3" /></svg>} />
          <Item text="إضافات" w={42} icon={<svg viewBox="0 0 16 14" className="h-[14px] w-4" fill="none" stroke="currentColor" strokeWidth="1.400"><circle cx="8" cy="3.500" r="2.500" /><circle cx="3.700" cy="10.500" r="2.500" /><circle cx="12.300" cy="10.500" r="2.500" /></svg>} />
          <Item text="اللغة" w={28} icon={<svg viewBox="0 0 14 14" className="h-[14px] w-[14px]" fill="none" stroke="currentColor"><path d="M4.500 10H.5V.5h9V4M9.500 4h4v9.500h-9L4.500 10l5-6" /><path d="M2.500 3h5M5 2v1M6.500 3Q6 6 3 7M3.500 4.500l2 2M8 11.500l1.800-4.500 1.800 4.500M8.600 10h2.400" /></svg>} />
          <Item text="إعدادات ال seo" w={85} icon={<FaEarthAfrica className="h-[14px] w-[14px]" />} />
          <Item text="إعدادات KYC" w={70} icon={<LiaUserCheckSolid />} />
          <Item text="إعدادت الأشعارات" w={99} icon={<LiaBell />} more />
          <Heading text="إعدادات المواجهة" w={84} />
          <Item text="إدارة القوالب" w={73} icon={<LiaHtml5 />} />
          <Item text="إدارة الصفحات" w={81} icon={<LiaListSolid />} />
          <Item text="إدارة الأقسام" w={75} icon={<LiaPuzzlePieceSolid />} more />
          <Heading text="إضافي" w={30} />
          <Item text="نمط الصيانة" w={67} icon={<LiaRobotSolid />} />
          <Item text="GDPR Cookie" w={76} icon={<LiaCookieBiteSolid />} />
          <Item text="النظام" w={34} icon={<svg viewBox="0 0 15 12" className="h-3 w-[15px]" fill="none" stroke="currentColor" strokeWidth="1.200"><path d="M.6.6h13.800v10.800H.6zM.6 4.200h13.800M.6 7.800h13.800M5 .6v10.800" /><path d="M2 2.400h1.500M2 6h1.500M2 9.600h1.500" /></svg>} more />
          <Item text="تنسيقات Css" w={71} icon={<LiaCss3Alt />} />
          <Item text="الابلاغ و الدعم" w={80} icon={<LiaBugSolid />} />
          <div className="mt-auto flex h-[10px] shrink-0 pl-[64px]">
            <Fit w={120} dir="ltr" className="text-[18px] leading-[22px] text-[#4634ff]">CHANGALAB <span className="text-[#28c76f]">V2.0</span></Fit>
          </div>
        </div>
      </div>
      <div className="flex w-[8px] flex-col items-center bg-[#0d1450] pt-[115px]">
        <div className="h-[461px] w-[5px] shrink-0 rounded-full bg-[#4634ff]" />
      </div>
    </div>
  );
}

function Scrollbar() {
  return (
    <div className="flex w-[15px] shrink-0 flex-col items-center bg-[#f1f1f1]">
      <svg viewBox="0 0 8 4" className="mt-[6px] h-1 w-2"><path d="m4 0 4 4H0z" fill="#8c8c8c" /></svg>
      <div className="mt-[5px] h-[526px] w-[11px] bg-[#c1c1c1]" />
      <div className="flex-1" />
      <svg viewBox="0 0 8 4" className="mb-[6px] h-1 w-2"><path d="M0 0h8L4 4z" fill="#505050" /></svg>
    </div>
  );
}

export default function App() {
  return (
    <div dir="ltr" className="flex h-[1080px] w-[1920px] overflow-hidden font-['Noto_Sans','DejaVu_Sans',sans-serif]">
      <Panel />
      <div className="flex min-w-0 flex-1 flex-col">
        <TabBar />
        <AddressBar />
        <div className="flex min-h-0 flex-1">
          <Page />
          <Sidebar />
          <Scrollbar />
        </div>
        <StatusBar />
      </div>
    </div>
  );
}
